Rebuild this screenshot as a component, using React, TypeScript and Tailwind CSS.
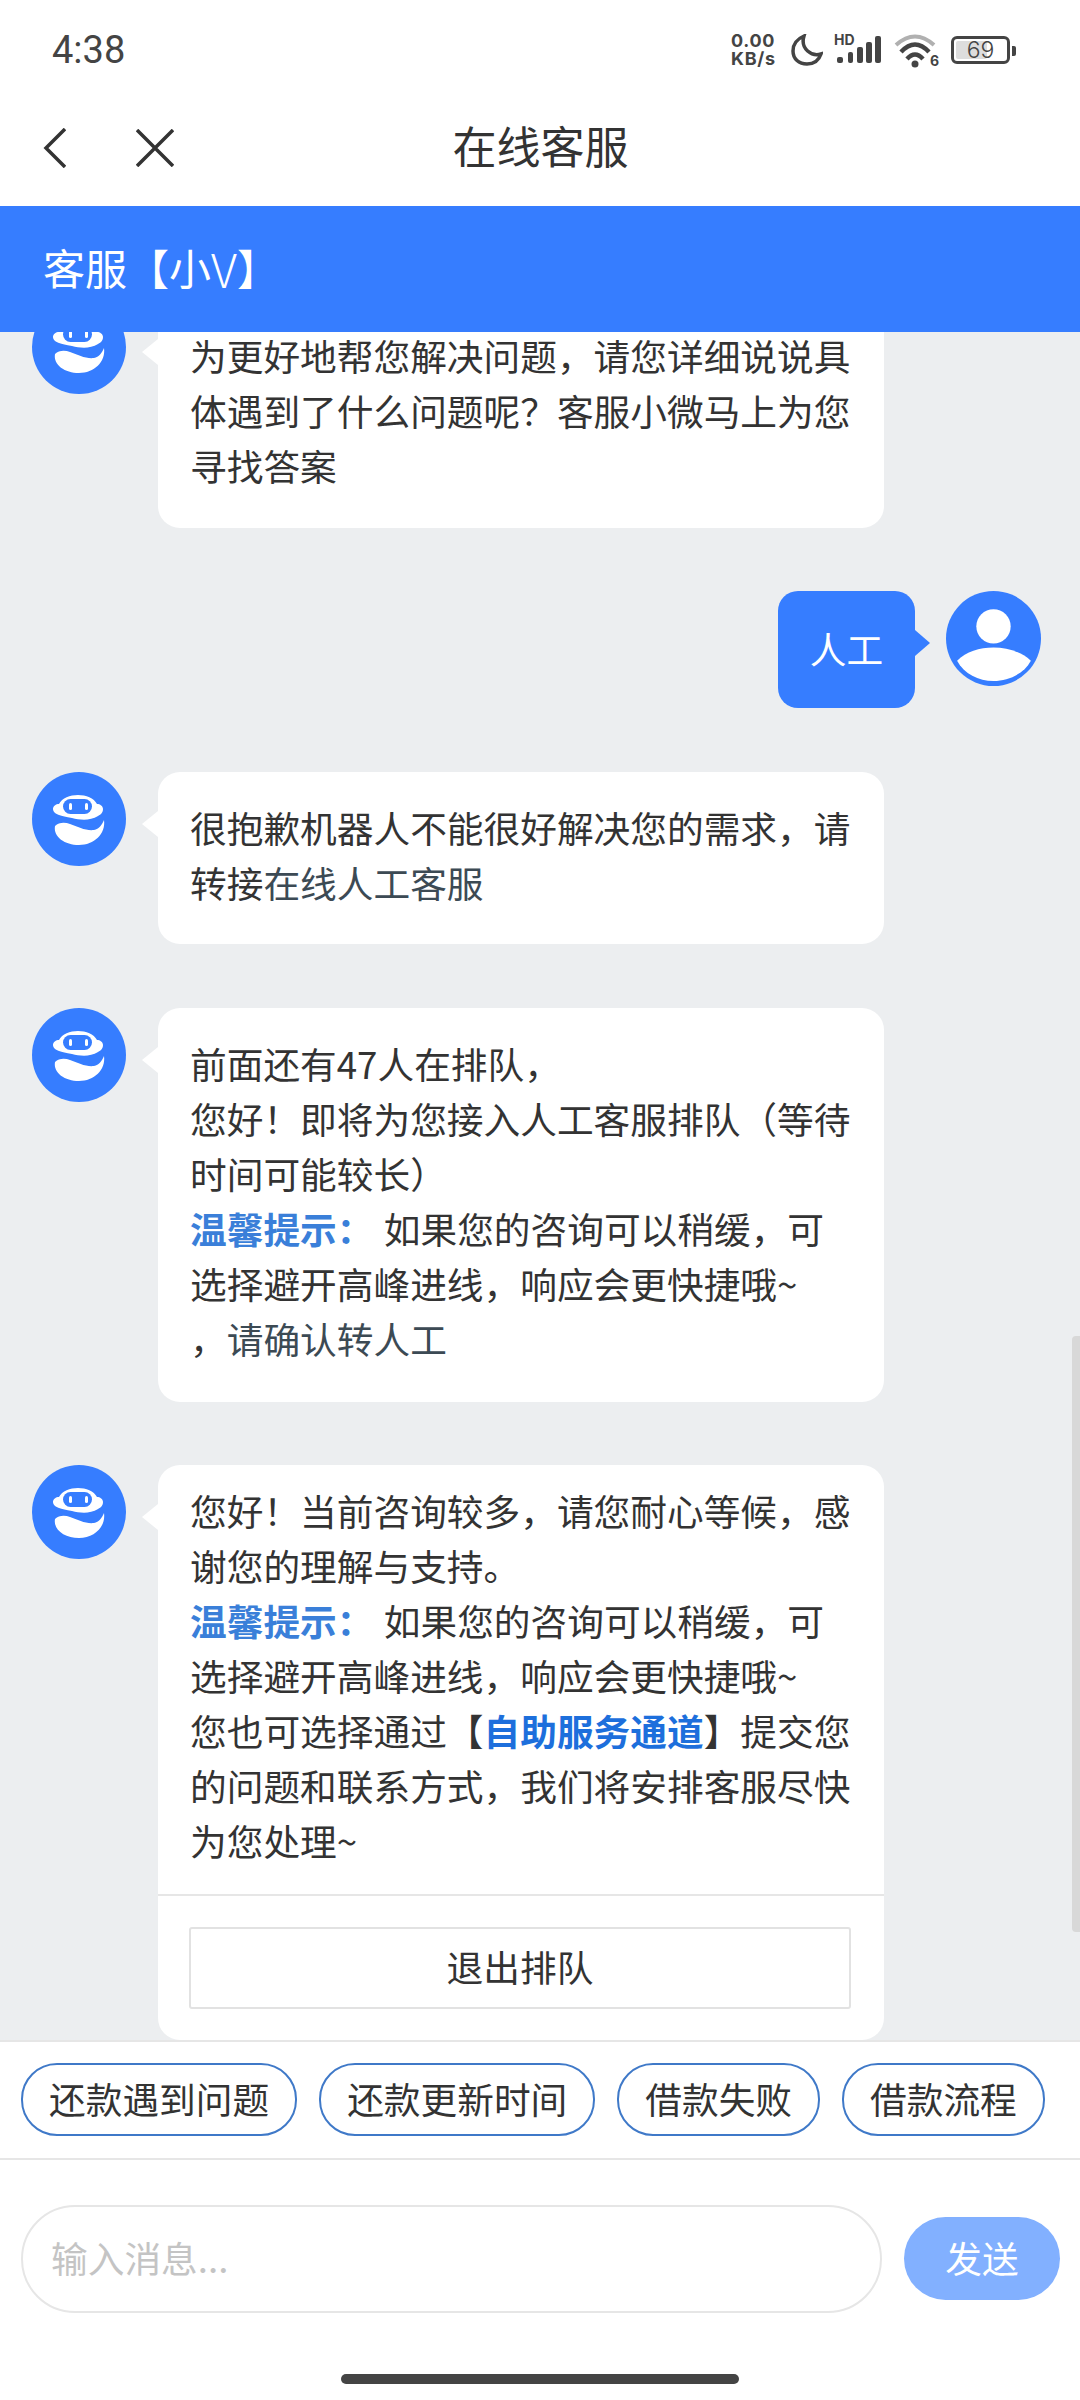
import type { ReactNode } from 'react';

function BotAvatar() {
  return (
    <svg viewBox="0 0 94 94" className="h-[94px] w-[94px] shrink-0">
      <circle cx="47" cy="47" r="47" fill="#367dff" />
      <path
        d="M21 37C21 34 24 32 27 32C30 26 38 23 46 23C54 23 62 26 65 32C68 32 71 34 71 37C71 41 68 43 66 44C58 49 48 48 40 46C34 45 30 44 27 43C24 42 21 40 21 37Z"
        fill="#fff"
      />
      <rect x="31" y="27" width="29" height="15" rx="7.5" fill="#367dff" />
      <rect x="37" y="31" width="3" height="7" rx="1.5" fill="#fff" />
      <rect x="53" y="31" width="3" height="7" rx="1.5" fill="#fff" />
      <path
        d="M23 54C27 50 33 50 38 52C46 55 54 59 62 58C67 57 70 53 72 48C74 62 62 73 47 73C33 73 21 65 23 54Z"
        fill="#fff"
      />
    </svg>
  );
}

function UserAvatar() {
  return (
    <svg viewBox="0 0 94 94" className="h-[95px] w-[95px] shrink-0">
      <circle cx="47" cy="47" r="47" fill="#367dff" />
      <circle cx="47" cy="35" r="17" fill="#fff" />
      <path
        d="M11 69C20 60 33 56 47 56C61 56 74 60 84 69C77 82 62 89 47 89C32 89 18 82 11 69Z"
        fill="#fff"
      />
    </svg>
  );
}

function BotRow({ children }: { children: ReactNode }) {
  return (
    <div className="flex items-start gap-[32px] pl-[32px]">
      <BotAvatar />
      <div className="relative w-[726px] rounded-[22px] bg-white">
        <span className="absolute -left-[16px] top-[39px] h-0 w-0 border-y-[13px] border-r-[16px] border-y-transparent border-r-white" />
        {children}
      </div>
    </div>
  );
}

function Tip() {
  return (
    <>
      <div>
        <b className="pr-[2px] font-bold text-[#3a7fd9]">温馨提示： </b>如果您的咨询可以稍缓，可
      </div>
      <div>选择避开高峰进线，响应会更快捷哦~</div>
    </>
  );
}

function StatusIcons() {
  return (
    <div className="flex items-center text-[#444] font-['Inter',sans-serif]">
      <div className="flex w-[50px] flex-col text-[18px] font-bold leading-[18px] tracking-[0.7px]">
        <span>0.00</span>
        <span>KB/s</span>
      </div>
      <svg viewBox="0 0 32 32" className="ml-[10px] h-[32px] w-[32px]" fill="none" stroke="#444" strokeWidth="3.5">
        <path d="M13 2C6 5 2 10 2 17c0 8 6 13 14 13 7 0 12-4 14-10-9 3-21-5-17-18z" />
      </svg>
      <div className="relative ml-[11px] h-[30px] w-[47px]">
        <span className="absolute -top-[2px] left-0 text-[14px] font-bold leading-[14px]">HD</span>
        <svg viewBox="0 0 47 30" className="h-[30px] w-[47px]" fill="#444">
          <rect x="3" y="22" width="6" height="6" rx="2" />
          <rect x="14" y="17" width="5" height="11" rx="2" />
          <rect x="23" y="12" width="6" height="16" rx="2" />
          <rect x="32" y="7" width="6" height="21" rx="2" />
          <rect x="41" y="1" width="6" height="27" rx="2" />
        </svg>
      </div>
      <div className="relative ml-[12px] h-[38px] w-[45px]">
        <svg viewBox="0 0 45 38" className="h-[38px] w-[45px]" fill="none">
          <path d="M3 14Q22-3 41 14" stroke="#b0b0b0" strokeWidth="4" />
          <path d="M8 21Q22 6 36 21" stroke="#444" strokeWidth="4.5" />
          <path d="M14 28Q22 19 30 28" stroke="#444" strokeWidth="4.5" />
          <circle cx="22" cy="33" r="3.5" fill="#444" />
        </svg>
        <span className="absolute -right-[1px] bottom-[1px] text-[14px] font-bold leading-[14px]">6</span>
      </div>
      <div className="relative ml-[13px] flex h-[28px] w-[59px] items-center justify-center rounded-[6px] border-[3px] border-[#444]">
        <span className="absolute bottom-[2px] left-[2px] top-[2px] w-[31px] rounded-[2px] bg-[#ddd]" />
        <span className="relative text-[23px] font-light leading-none">69</span>
        <span className="absolute -right-[9px] top-[7px] h-[10px] w-[4px] rounded-r-[2px] bg-[#444]" />
      </div>
    </div>
  );
}

const chips = ['还款遇到问题', '还款更新时间', '借款失败', '借款流程'];

export default function App() {
  return (
    <div
      lang="zh-CN"
      className="flex h-[2400px] w-[1080px] flex-col overflow-hidden bg-white text-[36.7px] leading-[55px] text-[#333] font-['Noto_Sans_CJK_SC','Noto_Sans',sans-serif]"
    >
      {/* status bar */}
      <div className="flex h-[90px] items-center justify-between pl-[52px] pr-[70px] pt-[10px]">
        <span className="text-[38px] leading-none text-[#444] font-['Roboto',sans-serif]">4:38</span>
        <StatusIcons />
      </div>

      {/* nav */}
      <div className="grid h-[116px] grid-cols-[1fr_auto_1fr] items-center pl-[43px]">
        <div className="flex items-center gap-[70px]">
          <svg viewBox="0 0 23 40" className="h-[40px] w-[23px]" fill="none" stroke="#333" strokeWidth="3.5">
            <path d="M22 1L3 20l19 19" />
          </svg>
          <svg viewBox="0 0 38 38" className="h-[38px] w-[38px]" fill="none" stroke="#333" strokeWidth="3.5">
            <path d="M1 1l36 36M37 1L1 37" />
          </svg>
        </div>
        <span className="-translate-x-[21px] pb-[6px] text-[44px] leading-none">在线客服</span>
        <span />
      </div>

      <div className="flex h-[126px] items-center bg-[#367dff] pb-[4px] pl-[43px] text-[42px] leading-none text-white">
        客服【小<span className="text-[47px] font-light leading-none">V</span>】
      </div>

      {/* messages */}
      <div className="relative h-[1708px] shrink-0 overflow-hidden bg-[#eceef0]">
        <div className="-mt-[32px] flex flex-col gap-[63px]">
          <BotRow>
            <div className="pb-[35px] pl-[32px] pr-[30px] pt-[28px] whitespace-nowrap">
              <div>为更好地帮您解决问题，请您详细说说具</div>
              <div>体遇到了什么问题呢？客服小微马上为您</div>
              <div>寻找答案</div>
            </div>
          </BotRow>

          <div className="mb-[1px] flex items-start justify-end gap-[31px] pr-[39px]">
            <div className="relative flex h-[117px] w-[137px] items-center justify-center rounded-[20px] bg-[#367dff] pb-[3px] text-white">
              人工
              <span className="absolute -right-[15px] top-[39px] h-0 w-0 border-y-[13px] border-l-[15px] border-y-transparent border-l-[#367dff]" />
            </div>
            <UserAvatar />
          </div>

          <div className="mb-[1px]">
            <BotRow>
              <div className="pb-[34px] pl-[32px] pr-[30px] pt-[28px] whitespace-nowrap">
                <div>很抱歉机器人不能很好解决您的需求，请</div>
                <div>
                  转接<span className="text-[#3c4a54]">在线人工客服</span>
                </div>
              </div>
            </BotRow>
          </div>

          <BotRow>
            <div className="pb-[36px] pl-[32px] pr-[30px] pt-[28px] whitespace-nowrap">
              <div>前面还有47人在排队，</div>
              <div>您好！即将为您接入人工客服排队（等待</div>
              <div>时间可能较长）</div>
              <Tip />
              <div>
                ，<span className="text-[#3c4a54]">请确认转人工</span>
              </div>
            </div>
          </BotRow>

          <BotRow>
            <div className="pb-[26px] pl-[32px] pr-[30px] pt-[18px] whitespace-nowrap">
              <div>您好！当前咨询较多，请您耐心等候，感</div>
              <div>谢您的理解与支持。</div>
              <Tip />
              <div>
                您也可选择通过【<b className="font-bold text-[#1d6fdc]">自助服务通道</b>】提交您
              </div>
              <div>的问题和联系方式，我们将安排客服尽快</div>
              <div>为您处理~</div>
            </div>
            <div className="border-t-2 border-[#e6e6e6] pb-[31px] pl-[31px] pr-[33px] pt-[31px]">
              <div className="flex h-[82px] items-center justify-center rounded-[3px] border-2 border-[#e2e2e2] pb-[4px]">
                退出排队
              </div>
            </div>
          </BotRow>
        </div>

        {/* scrollbar */}
        <span className="absolute right-0 top-[1004px] h-[596px] w-[8px] rounded-l-[4px] bg-[#d8d8d8]" />
      </div>

      {/* quick replies */}
      <div className="flex h-[120px] shrink-0 items-start gap-[22px] border-y-2 border-[#e6e6e6] pl-[21px] pt-[21px]">
        {chips.map((chip) => (
          <div
            key={chip}
            className="flex h-[73px] items-center rounded-[36px] border-2 border-[#3f79c8] px-[26px] pb-[3px] whitespace-nowrap"
          >
            {chip}
          </div>
        ))}
      </div>

      {/* input */}
      <div className="flex items-start gap-[22px] pl-[21px] pt-[45px]">
        <div className="flex h-[108px] w-[861px] items-center rounded-[54px] border-2 border-[#e6e6e6] pb-[3px] pl-[28px] text-[#c4c4c4]">
          输入消息...
        </div>
        <div className="mt-[12px] flex h-[83px] w-[156px] items-center justify-center rounded-[42px] bg-[#82b0ff] pb-[3px] text-white">
          发送
        </div>
      </div>

      <div className="mx-auto mt-[61px] h-[10px] w-[398px] rounded-full bg-[#444]" />
    </div>
  );
}
